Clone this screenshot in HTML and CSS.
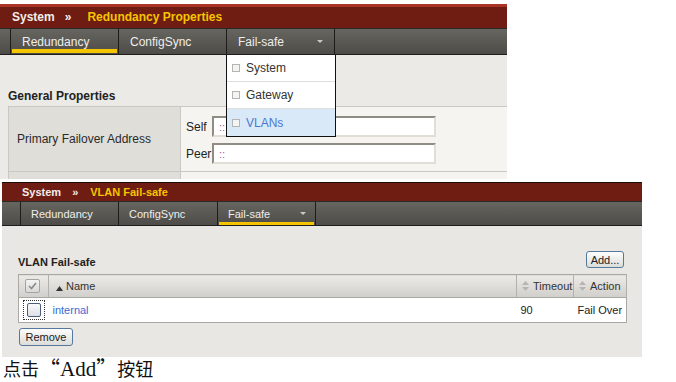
FILE: index.html
```html
<!DOCTYPE html>
<html lang="en">
<head>
    <meta charset="UTF-8">
    <meta name="viewport" content="width=device-width, initial-scale=1.0">
    <title>Redundancy - Fail-safe</title>
    <link rel="stylesheet" href="styles.css">
</head>
<body>
    <div class="shot shot-props">
        <div class="crumb">
            <span class="crumb-root">System</span>
            <span class="crumb-sep">»</span>
            <span class="crumb-page">Redundancy Properties</span>
        </div>
        <div class="tabs">
            <div class="tab-lead"></div>
            <div class="tab active">Redundancy</div>
            <div class="tab">ConfigSync</div>
            <div class="tab has-menu">Fail-safe<span class="caret"></span>
                <ul class="menu">
                    <li><span class="box"></span>System</li>
                    <li><span class="box"></span>Gateway</li>
                    <li class="hover"><span class="box"></span>VLANs</li>
                </ul>
            </div>
            <div class="tab-rest"></div>
        </div>
        <div class="content">
            <h2 class="section-title">General Properties</h2>
            <table class="props">
                <tr>
                    <td class="prop-name">Primary Failover Address</td>
                    <td class="prop-value">
                        <div class="field"><label>Self</label><input type="text" value="::"></div>
                        <div class="field"><label>Peer</label><input type="text" value="::"></div>
                    </td>
                </tr>
                <tr>
                    <td class="prop-name"></td>
                    <td class="prop-value"></td>
                </tr>
            </table>
        </div>
    </div>

    <div class="shot shot-vlan">
        <div class="crumb">
            <span class="crumb-root">System</span>
            <span class="crumb-sep">»</span>
            <span class="crumb-page">VLAN Fail-safe</span>
        </div>
        <div class="tabs">
            <div class="tab-lead"></div>
            <div class="tab">Redundancy</div>
            <div class="tab">ConfigSync</div>
            <div class="tab active has-menu">Fail-safe<span class="caret"></span></div>
            <div class="tab-rest"></div>
        </div>
        <div class="content">
            <div class="list-head">
                <h2 class="section-title">VLAN Fail-safe</h2>
                <button class="btn btn-add">Add...</button>
            </div>
            <table class="grid">
                <thead>
                    <tr>
                        <th class="col-check"><span class="check checked">
                            <svg width="9" height="8" viewBox="0 0 9 8"><path d="M1 4l2.5 2.5L8 1" fill="none" stroke="#8a8a88" stroke-width="1.6"/></svg>
                        </span></th>
                        <th class="col-name">
                            <svg class="sort" width="7" height="5" viewBox="0 0 7 5"><path d="M3.5 0L7 5H0z" fill="#333"/></svg>Name
                        </th>
                        <th class="col-timeout">
                            <svg class="sort" width="7" height="10" viewBox="0 0 7 10"><path d="M3.5 0L7 4H0zM0 6h7L3.5 10z" fill="#b6b5b1"/></svg>Timeout
                        </th>
                        <th class="col-action">
                            <svg class="sort" width="7" height="10" viewBox="0 0 7 10"><path d="M3.5 0L7 4H0zM0 6h7L3.5 10z" fill="#b6b5b1"/></svg>Action
                        </th>
                    </tr>
                </thead>
                <tbody>
                    <tr>
                        <td class="col-check"><span class="focus"><span class="check"></span></span></td>
                        <td><a class="link">internal</a></td>
                        <td>90</td>
                        <td>Fail Over</td>
                    </tr>
                </tbody>
            </table>
            <button class="btn btn-remove">Remove</button>
        </div>
    </div>

    <p class="caption" lang="zh-CN">点击<span class="latin"><span class="quote">“</span>Add<span class="quote">”</span></span>按钮</p>
</body>
</html>
```

FILE: styles.css
```css
* {
    box-sizing: border-box;
}

body {
    margin: 0;
    background: #fff;
    font-family: "Liberation Sans", Arial, sans-serif;
    color: #222;
}

.shot {
    overflow: hidden;
}

/* first screenshot */
.shot-props {
    width: 507px;
    height: 175px;
    margin-top: 4px;
    background: #ebeae6;
}

.crumb {
    display: flex;
    height: 24px;
    border-top: 3px solid #a93425;
    background: #6f1c12;
    color: #f2eeea;
    font-size: 12px;
    font-weight: bold;
    line-height: 21px;
    padding-left: 12px;
}

.crumb-sep {
    margin: 0 16px 0 10px;
}

.crumb-page {
    color: #f7c500;
}

.tabs {
    display: flex;
    height: 27px;
    border-top: 1px solid #2a2927;
    border-bottom: 1px solid #1e1d1b;
    background: linear-gradient(#67655f, #4e4c48);
}

.tab-lead {
    width: 10px;
}

.tab {
    position: relative;
    display: flex;
    align-items: center;
    width: 108px;
    border-left: 1px solid #1d1c1a;
    padding-left: 11px;
    color: #eeeeec;
    font-size: 12px;
}

.tab.active::after {
    content: "";
    position: absolute;
    left: 1px;
    right: 1px;
    bottom: 1px;
    height: 4px;
    background: #f5c400;
}

.has-menu {
    padding-right: 11px;
}

.caret {
    margin-left: auto;
    width: 0;
    height: 0;
    border-left: 3px solid transparent;
    border-right: 3px solid transparent;
    border-top: 3px solid #c9c8c4;
}

.tab-rest {
    flex: 1;
    border-left: 1px solid #1d1c1a;
}

.menu {
    position: absolute;
    top: calc(100% + 1px);
    left: -1px;
    width: 110px;
    margin: 0;
    padding: 0;
    list-style: none;
    background: #fff;
    border: 1px solid #111;
    border-top: none;
}

.menu li {
    display: flex;
    align-items: center;
    height: 27px;
    padding-left: 5px;
    border-bottom: 1px solid #dededc;
    color: #333;
    font-size: 12px;
}

.menu li:last-child {
    border-bottom: none;
}

.menu li.hover {
    background: #d9e9f8;
    color: #4a78d0;
}

.box {
    width: 8px;
    height: 8px;
    margin-right: 6px;
    border: 1px solid #b4b4b2;
    background: #f4f4f4;
}

.shot-props .content {
    padding: 34px 0 0 8px;
}

.section-title {
    margin: 0 0 3px;
    font-size: 12px;
    line-height: 14px;
    color: #222;
}

.props {
    width: 520px;
    border-collapse: collapse;
    border-top: 1px solid #c6c5c0;
}

.props td {
    border: 1px solid #c9c8c3;
    padding: 0;
}

.prop-name {
    width: 172px;
    height: 65px;
    padding-left: 8px !important;
    background: #dfded9;
    font-size: 12px;
    color: #2a2a2a;
}

.prop-value {
    padding: 9px 6px 7px 5px !important;
    background: #f5f4f1;
    vertical-align: top;
}

.field {
    display: flex;
    align-items: center;
    margin-bottom: 6px;
}

.field:last-child {
    margin-bottom: 0;
}

.field label {
    width: 26px;
    font-size: 12px;
    color: #222;
}

.field input {
    width: 224px;
    height: 21px;
    border: 2px solid;
    border-color: #8e8c83 #e0ded6 #e0ded6 #8e8c83;
    background: #fff;
    padding: 0 5px;
    font-family: "Liberation Sans", Arial, sans-serif;
    font-size: 11px;
    color: #9a60aa;
}

/* second screenshot */
.shot-vlan {
    width: 640px;
    height: 175px;
    margin: 3px 0 0 2px;
    background: #e8e7e3;
}

.shot-vlan .crumb {
    height: 19px;
    border-top: 1px solid #1a0c09;
    line-height: 18px;
    font-size: 11px;
    padding-left: 20px;
}

.shot-vlan .crumb-sep {
    margin: 0 12px 0 11px;
}

.shot-vlan .tabs {
    height: 25px;
}

.shot-vlan .tab-lead {
    width: 18px;
}

.shot-vlan .tab {
    width: 98px;
    padding-left: 10px;
    font-size: 11px;
}

.shot-vlan .tab:nth-child(3) {
    width: 99px;
}

.shot-vlan .has-menu {
    padding-right: 9px;
}

.shot-vlan .tab.active::after {
    left: 1px;
    right: 1px;
    bottom: 0;
    height: 3px;
}

.shot-vlan .content {
    padding: 24px 15px 0 16px;
}

.list-head {
    display: flex;
    justify-content: space-between;
    align-items: flex-end;
    height: 19px;
}

.list-head .section-title {
    margin: 0;
    font-size: 11px;
    line-height: 13px;
}

.btn {
    height: 18px;
    padding: 0;
    border: 1px solid #56789c;
    border-radius: 3px;
    background: linear-gradient(#fdfdfd, #dcdcd9);
    font-family: "Liberation Sans", Arial, sans-serif;
    font-size: 11px;
    color: #222;
}

.btn-add {
    width: 38px;
    height: 17px;
    margin: 0 3px 1px 0;
}

.btn-remove {
    width: 54px;
    margin: 5px 0 0 1px;
}

.grid {
    width: 100%;
    margin-top: 5px;
    border-collapse: collapse;
    border: 1px solid #a9a8a4;
    font-size: 11px;
}

.grid th {
    height: 23px;
    padding: 0 0 0 5px;
    background: linear-gradient(#eceae7, #d0cfcb);
    border-right: 1px solid #b1b0ac;
    border-bottom: 1px solid #a9a8a4;
    text-align: left;
    font-weight: normal;
    color: #333;
    white-space: nowrap;
}

.grid td {
    height: 25px;
    padding: 0 0 0 4px;
    background: #fff;
    color: #222;
}

.grid .col-check {
    width: 30px;
    padding: 0 0 0 6px;
}

.col-name {
    width: 469px;
}

.grid th.col-name {
    padding-left: 7px;
}

.grid th.col-name .sort {
    margin-right: 3px;
}

.col-timeout {
    width: 57px;
}

.col-action {
    width: 53px;
}

.sort {
    margin-right: 4px;
    vertical-align: -1px;
}

.check {
    display: flex;
    align-items: center;
    justify-content: center;
    width: 14px;
    height: 14px;
    border: 1px solid #4d5e7a;
    border-radius: 2px;
    background: linear-gradient(#fafafa, #dde0e6);
}

.check.checked {
    width: 15px;
    border-color: #a4a4a2;
    background: linear-gradient(#f4f4f2, #d8d8d6);
}

.focus {
    display: inline-flex;
    padding: 2px 3px;
    border: 1px dotted #333;
}

.grid td.col-check {
    padding-left: 4px;
}

.link {
    color: #3a6ad6;
}

/* caption */
.caption {
    width: 372px;
    margin: 0;
    padding-left: 3px;
    border-bottom: 1px solid #5c1f14;
    font-family: "Liberation Serif", "Noto Sans CJK SC", serif;
    font-size: 18px;
    line-height: 23px;
    color: #111;
}

.latin {
    font-size: 21px;
    line-height: 1;
}

.quote {
    font-family: "Noto Sans CJK SC", sans-serif;
}
```
